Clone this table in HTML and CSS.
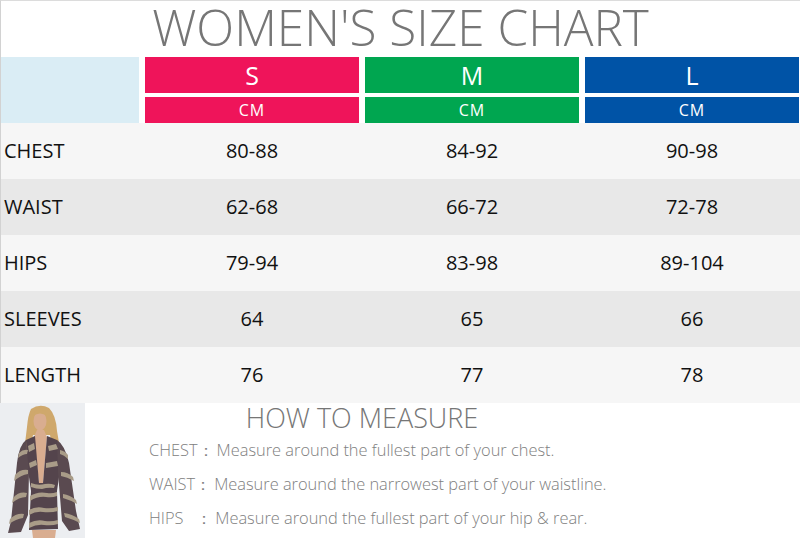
FILE: index.html
```html
<!DOCTYPE html>
<html>
<head>
<meta charset="utf-8">
<link rel="stylesheet" href="styles.css">
</head>
<body>
<div class="page">
  <div class="title-bar"><h1 class="title">WOMEN'S SIZE CHART</h1></div>
  <div class="chart">
    <div class="head">
      <div class="corner"></div>
      <div class="size size-s"><div class="name">S</div><div class="unit">CM</div></div>
      <div class="size size-m"><div class="name">M</div><div class="unit">CM</div></div>
      <div class="size size-l"><div class="name">L</div><div class="unit">CM</div></div>
    </div>
    <div class="row light"><div class="label">CHEST</div><div class="val">80-88</div><div class="val">84-92</div><div class="val">90-98</div></div>
    <div class="row dark"><div class="label">WAIST</div><div class="val">62-68</div><div class="val">66-72</div><div class="val">72-78</div></div>
    <div class="row light"><div class="label">HIPS</div><div class="val">79-94</div><div class="val">83-98</div><div class="val">89-104</div></div>
    <div class="row dark"><div class="label">SLEEVES</div><div class="val">64</div><div class="val">65</div><div class="val">66</div></div>
    <div class="row light"><div class="label">LENGTH</div><div class="val">76</div><div class="val">77</div><div class="val">78</div></div>
  </div>
  <div class="measure">
    <div class="photo">
      <svg viewBox="0 0 85 135" width="85" height="135">
        <rect width="85" height="135" fill="#eceef1"/>
        <path d="M31 6 Q40 0 49 5 Q56 12 57 28 Q60 46 63 62 L56 62 L50 32 L33 32 L28 56 L23 58 Q25 40 27 24 Q28 12 31 6 Z" fill="#cfa86c"/>
        <ellipse cx="40" cy="18" rx="6.5" ry="9.5" fill="#d9ad90"/>
        <path d="M33 10 Q40 4 47 9 L47 13 Q40 8 33 13 Z" fill="#cfa86c"/>
        <path d="M37 27 L44 27 L47 34 L43 80 L39 80 L34 34 Z" fill="#d9ad90"/>
        <path d="M26 37 L35 33 L39 80 L43 80 L47 33 L57 37 Q62 45 61 60 L57 88 L58 126 L29 127 L31 88 L27 60 Z" fill="#54444c"/>
        <path d="M26 37 Q19 42 17 60 L11 118 L8 130 L21 129 L28 112 L29 70 Z" fill="#5a4a50"/>
        <path d="M57 37 Q65 42 69 60 L76 108 L80 126 L69 128 L62 118 L58 70 Z" fill="#5a4a50"/>
        <g fill="#a99c88">
          <path d="M19 50 Q23 46 28 47 L27 51 Q23 51 18 55 Z"/>
          <path d="M15 72 Q20 66 28 67 L28 71 Q21 72 14 78 Z"/>
          <path d="M13 95 Q19 88 27 90 L26 94 Q19 94 12 100 Z"/>
          <path d="M10 116 Q16 110 24 111 L23 115 Q16 116 9 121 Z"/>
          <path d="M60 47 Q65 48 68 52 L68 56 Q64 52 60 51 Z"/>
          <path d="M61 69 Q68 69 73 74 L74 78 Q67 74 61 73 Z"/>
          <path d="M63 91 Q70 92 76 97 L77 101 Q70 97 63 95 Z"/>
          <path d="M64 110 Q72 111 79 116 L80 120 Q72 116 65 114 Z"/>
          <path d="M30 93 Q38 88 47 90 Q52 91 57 89 L57 93 Q52 95 46 94 Q38 93 30 98 Z"/>
          <path d="M29 107 Q36 103 44 105 Q51 106 58 104 L58 108 Q51 110 43 109 Q36 108 29 112 Z"/>
          <path d="M29 120 Q37 116 45 118 Q52 119 58 117 L58 121 Q52 123 44 122 Q37 121 29 125 Z"/>
          <path d="M31 80 Q38 83 45 81 Q50 80 55 82 L54 85 Q48 84 42 86 Q36 86 31 84 Z"/>
          <path d="M28 43 L34 40 L35 46 L29 49 Z"/>
          <path d="M48 43 L56 41 L58 46 L49 48 Z"/>
          <path d="M29 60 L36 57 L37 62 L30 65 Z"/>
          <path d="M46 60 L57 58 L58 63 L46 65 Z"/>
        </g>
        <path d="M32 127 L56 127 L55 135 L33 135 Z" fill="#d9ad90"/>
      </svg>
    </div>
    <div class="guide">
      <h2 class="guide-title">HOW TO MEASURE</h2>
      <p class="tip"><span class="tip-key">CHEST：</span>Measure around the fullest part of your chest.</p>
      <p class="tip"><span class="tip-key">WAIST：</span>Measure around the narrowest part of your waistline.</p>
      <p class="tip"><span class="tip-key">HIPS&nbsp;&nbsp;&nbsp;：</span>Measure around the fullest part of your hip &amp; rear.</p>
    </div>
  </div>
</div>
</body>
</html>
```

FILE: styles.css
```css
* { box-sizing: border-box; }
html, body {
  margin: 0;
  padding: 0;
  background: #ffffff;
}
body {
  font-family: "Open Sans", "Noto Sans", sans-serif;
  width: 800px;
  height: 538px;
  overflow: hidden;
}
.page {
  width: 800px;
  height: 538px;
  border-left: 1px solid #d2d2d2;
  border-top: 1px solid #dcdcdc;
  display: flex;
  flex-direction: column;
}
.title-bar {
  height: 56px;
  display: flex;
  justify-content: center;
  align-items: flex-start;
}
.title {
  margin: 0;
  font-size: 49.5px;
  line-height: 54px;
  margin-top: -1px;
  font-weight: 300;
  color: #767676;
  text-align: center;
  white-space: nowrap;
}
.head {
  display: grid;
  grid-template-columns: 138px 214px 214px 214px;
  column-gap: 6px;
  height: 66px;
}
.corner {
  background: #daedf5;
}
.size {
  display: flex;
  flex-direction: column;
  gap: 4px;
  background: #ffffff;
}
.name {
  height: 36px;
  font-size: 25px;
  line-height: 36px;
  color: #ffffff;
  text-align: center;
}
.unit {
  height: 26px;
  font-size: 16px;
  line-height: 26px;
  letter-spacing: 1px;
  color: #ffffff;
  text-align: center;
}
.size-s .name, .size-s .unit { background: #ef145a; }
.size-m .name, .size-m .unit { background: #00a650; }
.size-l .name, .size-l .unit { background: #0053a6; }
.row {
  display: grid;
  grid-template-columns: 138px 214px 214px 214px;
  column-gap: 6px;
  height: 56px;
  align-items: center;
  font-size: 20px;
  line-height: 26px;
  color: #111111;
  padding-bottom: 1px;
}
.row.light { background: #f6f6f6; }
.row.dark { background: #e8e8e8; }
.label {
  padding-left: 3px;
}
.val {
  text-align: center;
}
.measure {
  flex: 1;
  display: flex;
}
.photo {
  width: 85px;
  height: 135px;
  margin-left: -1px;
}
.photo svg { display: block; }
.guide {
  flex: 1;
  padding-left: 64px;
}
.guide-title {
  margin: 0;
  width: 426px;
  text-align: center;
  font-size: 27px;
  line-height: 30px;
  font-weight: 300;
  color: #767676;
  white-space: nowrap;
}
.tip {
  margin: 0;
  height: 34px;
  font-size: 16.4px;
  line-height: 34px;
  font-weight: 300;
  color: #808080;
  white-space: nowrap;
}
.tip-key {
  display: inline-block;
  margin-right: 3px;
}
```
